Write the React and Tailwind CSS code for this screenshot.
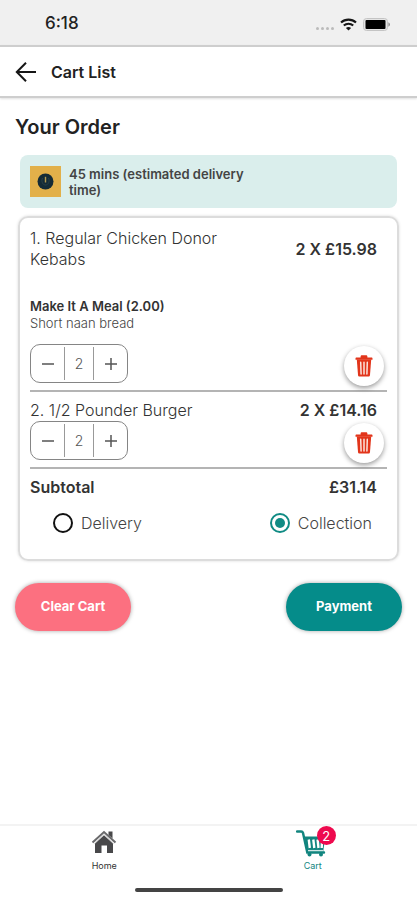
import React, { useState } from "react";

const items = [
  { id: 1, name: "1. Regular Chicken Donor Kebabs", qty: 2, price: "£15.98", option: "Make It A Meal (2.00)", note: "Short naan bread" },
  { id: 2, name: "2. 1/2 Pounder Burger", qty: 2, price: "£14.16" },
];

const StatusBar = () => (
  <div className="flex h-[45px] items-center justify-between bg-[#f0f0f0] pl-[45px] pr-[26px] pt-[3px]">
    <span className="text-[17px] font-medium text-[#222]">6:18</span>
    <div className="flex items-center">
      <div className="mr-1.5 mt-2 flex gap-0.5">
        <i className="h-[3px] w-[3px] rounded-full bg-[#bbb]" />
        <i className="h-[3px] w-[3px] rounded-full bg-[#bbb]" />
        <i className="h-[3px] w-[3px] rounded-full bg-[#bbb]" />
        <i className="h-[3px] w-[3px] rounded-full bg-[#bbb]" />
      </div>
      <svg width="17" height="13" viewBox="0 0 17 13" fill="none" stroke="#161616" strokeWidth="2.1">
        <path d="M1 4.6C5.2.6 11.8.6 16 4.6" />
        <path d="M3.8 7.6c2.7-2.5 6.7-2.5 9.4 0" />
        <path d="M8.5 12.6 5.9 9.9c1.5-1.3 3.7-1.3 5.2 0z" fill="#161616" stroke="none" />
      </svg>
      <svg className="ml-1.5" width="28" height="13" viewBox="0 0 28 13">
        <rect x="0.5" y="0.5" width="24" height="12" rx="3" fill="#e4e4e4" stroke="#c4c4c4" />
        <rect x="2.5" y="2" width="20" height="9" rx="1" fill="#000" />
        <path d="M25.5 4.3c1.8.7 1.8 3.7 0 4.4z" fill="#777" />
      </svg>
    </div>
  </div>
);

const TrashIcon = () => (
  <svg width="18" height="22" viewBox="0 0 18 22">
    <path d="M5.6 2.5V1.7C5.6.8 6.2.3 7 .3h4c.8 0 1.4.5 1.4 1.4v.8h4.1c.6 0 1 .4 1 1v1.2H.5V3.5c0-.6.4-1 1-1z" fill="#e2351b" />
    <path d="M1.8 4.5h14.4L15 19.9c-.1 1-.7 1.6-1.7 1.6H4.700c-1 0-1.600-.6-1.700-1.600z" fill="#e2351b" />
    <path d="M5.700 7.300l.4 11.700M9 7.300V19M12.300 7.300l-.4 11.700" stroke="#fbe3dc" strokeWidth="1.500" strokeLinecap="round" />
  </svg>
);

const Stepper = ({ value, onChange }) => (
  <div className="flex h-[39px] w-[98px] items-stretch rounded-[10px] border border-[#858585] py-0.5 text-[#555]">
    <button type="button" aria-label="Decrease" onClick={() => onChange(Math.max(1, value - 1))} className="flex flex-1 items-center justify-center">
      <svg width="12" height="12" viewBox="0 0 12 12" stroke="currentColor" strokeWidth="1.5"><path d="M0 6h12" /></svg>
    </button>
    <span className="flex w-[30px] items-center justify-center border-x border-[#999] text-sm font-light">{value}</span>
    <button type="button" aria-label="Increase" onClick={() => onChange(value + 1)} className="flex flex-1 items-center justify-center">
      <svg width="12" height="12" viewBox="0 0 12 12" stroke="currentColor" strokeWidth="1.5"><path d="M0 6h12M6 0v12" /></svg>
    </button>
  </div>
);

const CartItem = ({ item }) => {
  const [qty, setQty] = useState(item.qty);

  return (
    <li className="border-b-2 border-[#b4b4b4] pb-1">
      <div className="flex items-center justify-between pr-2.5">
        <h2 className="max-w-[200px] text-base leading-[21px] font-light text-[#333]">{item.name}</h2>
        <span className="text-base leading-[21px] font-semibold text-[#333]">{qty} X {item.price}</span>
      </div>
      {item.option && (
        <div className="mt-7 mb-3">
          <p className="text-[13px] leading-[17px] font-semibold text-[#333]">{item.option}</p>
          <p className="text-[13px] leading-[17px] font-light text-[#444]">{item.note}</p>
        </div>
      )}
      <div className="flex items-start justify-between pr-[3px]">
        <Stepper value={qty} onChange={setQty} />
        <button type="button" aria-label="Remove item" className="mt-0.5 flex h-10 w-10 items-center justify-center rounded-full bg-white shadow-[0_2px_5px_rgba(0,0,0,0.4)]">
          <TrashIcon />
        </button>
      </div>
    </li>
  );
};

const Radio = ({ label, value, selected, onSelect }) => (
  <label className="flex items-center gap-2 text-base font-light text-[#444]">
    <input
      type="radio"
      name="method"
      value={value}
      checked={selected === value}
      onChange={() => onSelect(value)}
      className="h-5 w-5 appearance-none rounded-full border-2 border-[#111] bg-clip-content p-[3px] checked:border-[#108b84] checked:bg-[#108b84]"
    />
    {label}
  </label>
);

const HomeIcon = () => (
  <svg width="26" height="24" viewBox="0 0 26 24">
    <path d="M4 12.5 13 4.500l9 8V23h-6v-7.500h-5.500V23H4z" fill="#48484a" />
    <path d="M17.500 1.500h4v7l-4-3.500z" fill="#48484a" />
    <path d="M1.500 12.500 13 2l11.500 10.500" fill="none" stroke="#6a6a6c" strokeWidth="2" />
    <path d="M3 13.800 13 4.700l10 9.100" fill="none" stroke="#e4e4e4" strokeWidth="1.100" />
  </svg>
);

const CartIcon = () => (
  <svg width="30" height="27" viewBox="0 0 30 27">
    <path d="M1 1.500h4.200c1 0 1.500.5 1.800 1.400L11.300 22.500H28" fill="none" stroke="#12857f" strokeWidth="2.400" strokeLinecap="round" />
    <path d="M7.800 6.500h21.500l-2.300 16.500H11.500z" fill="#12857f" />
    <path d="M12.800 9.500l1 8.500M17.300 9.500l1 8.500M21.600 9.500l.9 8.500M26 11l-.3 7" stroke="#fff" strokeWidth="2.400" />
    <path d="M12 20.600h15" stroke="#cfe8e5" strokeWidth="1.300" />
    <circle cx="13.500" cy="24.600" r="2" fill="#12857f" />
    <circle cx="25" cy="24.600" r="2" fill="#12857f" />
  </svg>
);

const App = () => {
  const [method, setMethod] = useState("collection");

  return (
    <div className="flex min-h-screen flex-col bg-white font-['Inter','Liberation_Sans',sans-serif]">
      <StatusBar />
      <header className="flex h-[53px] items-center gap-3.5 border-y-2 border-[#cecece] px-[15px] shadow-[0_1px_2px_rgba(0,0,0,0.12)]">
        <button type="button" aria-label="Back">
          <svg width="22" height="20" viewBox="0 0 22 20" fill="none" stroke="#161616" strokeWidth="2">
            <path d="M11 .8 1.8 10l9.200 9.200M1.800 10H21" />
          </svg>
        </button>
        <h1 className="text-base font-semibold text-[#222]">Cart List</h1>
      </header>

      <main className="flex-1 px-[15px] pt-4">
        <h2 className="text-xl leading-[26px] font-semibold text-[#222]">Your Order</h2>

        <div className="mx-[5px] mt-[15px] flex h-[53px] items-center gap-2 rounded-lg bg-[#daeeec] px-2.5">
          <div className="flex h-[31px] w-[31px] shrink-0 items-center justify-center bg-[#e2b04a]">
            <svg width="17" height="17" viewBox="0 0 17 17">
              <circle cx="8.5" cy="8.5" r="8" fill="#142b36" />
              <path d="M8.500 3.800v5.700" stroke="#b39a50" strokeWidth="1.400" />
              <path d="M5.500 5c-1.500 3 0 7 3 7s4.500-4 3-7" fill="none" stroke="#29414a" />
            </svg>
          </div>
          <p className="max-w-[190px] text-[13px] leading-4 font-semibold text-[#444]">45 mins (estimated delivery time)</p>
        </div>

        <section className="mx-[3px] mt-2 rounded-[10px] border-2 border-[#dcdcdc] px-2.5 pt-2.5 pb-6 shadow-[0_0_3px_rgba(0,0,0,0.15)]">
          <ul className="flex flex-col gap-2">
            {items.map((item) => (
              <CartItem key={item.id} item={item} />
            ))}
          </ul>
          <div className="mt-2 flex justify-between pr-2.5 text-base leading-[21px] font-semibold text-[#333]">
            <span>Subtotal</span>
            <span>£31.14</span>
          </div>
          <div className="mt-[13px] flex justify-between pl-[23px] pr-[15px]">
            <Radio label="Delivery" value="delivery" selected={method} onSelect={setMethod} />
            <Radio label="Collection" value="collection" selected={method} onSelect={setMethod} />
          </div>
        </section>

        <div className="mt-[22px] flex justify-between">
          <button type="button" className="h-12 w-[116px] rounded-full bg-[#fc7080] text-[13px] font-bold text-white shadow-[0_0_4px_rgba(0,0,0,0.35)]">Clear Cart</button>
          <button type="button" className="h-12 w-[116px] rounded-full bg-[#058c8a] text-[13px] font-bold text-white shadow-[0_0_4px_rgba(0,0,0,0.35)]">Payment</button>
        </div>
      </main>

      <nav className="border-t-2 border-[#f3f3f3] pb-2">
        <div className="grid grid-cols-2 pt-1">
          <a href="#home" className="flex flex-col items-center text-[9px] leading-3 text-[#333]">
            <span className="flex h-[30px] items-start"><HomeIcon /></span>
            Home
          </a>
          <a href="#cart" className="flex flex-col items-center text-[9px] leading-3 text-[#12857f]">
            <span className="relative flex h-[30px] items-start pr-1">
              <CartIcon />
              <span className="absolute -top-1 -right-1.5 flex h-[19px] w-[19px] items-center justify-center rounded-full bg-[#ee0a4e] text-[13px] text-white">2</span>
            </span>
            Cart
          </a>
        </div>
        <div className="mx-auto mt-4 h-1 w-[148px] rounded-full bg-[#444]" />
      </nav>
    </div>
  );
};

export default App;
